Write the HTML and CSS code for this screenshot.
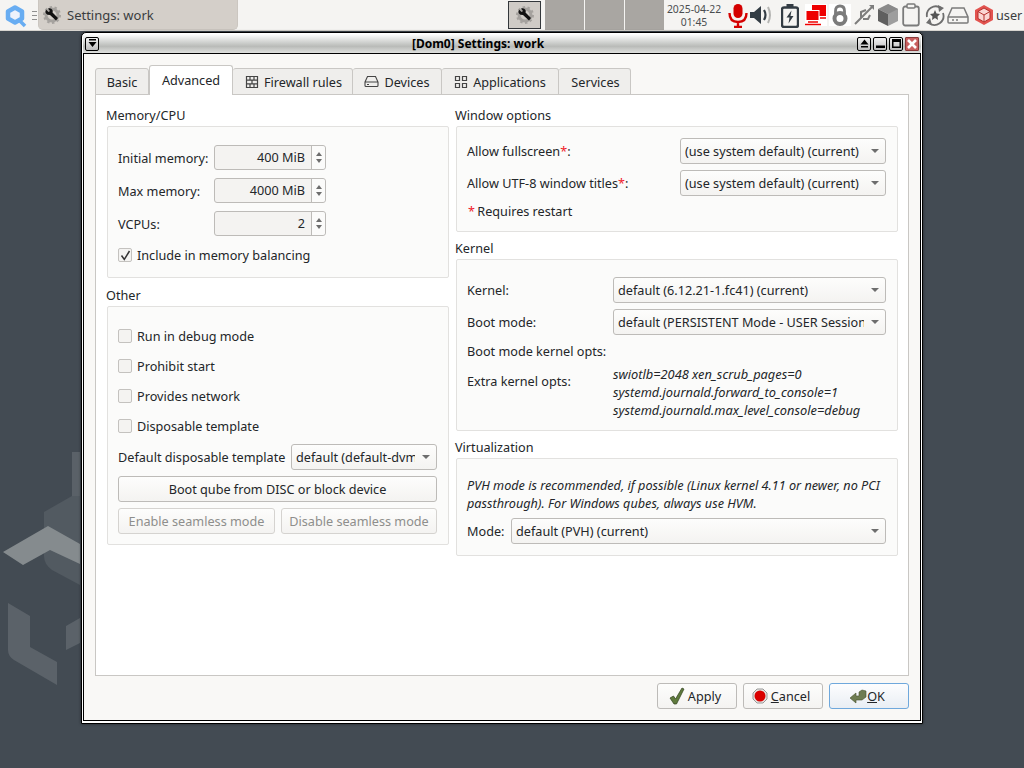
FILE: index.html
```html
<!DOCTYPE html>
<html lang="en">
<head>
<meta charset="utf-8">
<title>Settings: work</title>
<link rel="stylesheet" href="styles.css">
</head>
<body>
<svg class="wallpaper" viewBox="0 0 100 300" width="100" height="300" aria-hidden="true">
  <path d="M72 22 L80 22 L80 100 L72 88 Z" fill="#5a6168"/>
  <path d="M44 82 L72 66 L80 66 L80 155 L52 140 Q44 134 44 126 Z" fill="#525a61"/>
  <path d="M3 122 L48 96 L80 114 L80 134 L50 120 L23 135 Z" fill="#858b8e"/>
  <path d="M8 173 L30 186 L30 217 L57 232 L57 255 L14 230 Q8 226 8 220 Z" fill="#5b6269"/>
  <path d="M66 196 L80 188 L80 213 L66 220 Z" fill="#5b6269"/>
</svg>
<header class="panel">
  <svg class="logo" width="22" height="26" viewBox="0 0 22 26"><path d="M10 5.500 L17 9.500 V16.500 L10 20.500 L3 16.500 V9.500 Z" fill="#eef2fb" stroke="#68adf2" stroke-width="4.500" stroke-linejoin="round"/><path d="M15 19 L20 24" stroke="#68adf2" stroke-width="3.500"/></svg>
  <div class="handle"><i></i><i></i><i></i></div>
  <div class="task">
    <svg width="18" height="18" viewBox="0 0 18 18"><circle cx="9" cy="9" r="6" fill="none" stroke="#a5a29e" stroke-width="3"/><circle cx="9" cy="9" r="8" fill="none" stroke="#a5a29e" stroke-width="2" stroke-dasharray="2.500 2.500"/><path d="M3 3.500 L5.500 6 L7 5 L5 2.500 Q8 1.500 9.500 4 Q10 5.500 9.500 6.500 L15 12 L13 14.500 L7 9 Q4 9 3 7.500 Q2 5.500 3 3.500 Z" fill="#111"/></svg>
    <span>Settings: work</span>
  </div>
  <div class="pager">
    <div class="desk desk-on"><svg width="18" height="18" viewBox="0 0 18 18"><circle cx="9" cy="9" r="6" fill="none" stroke="#a5a29e" stroke-width="3"/><circle cx="9" cy="9" r="8" fill="none" stroke="#a5a29e" stroke-width="2" stroke-dasharray="2.500 2.500"/><path d="M3 3.500 L5.500 6 L7 5 L5 2.500 Q8 1.500 9.500 4 Q10 5.500 9.500 6.500 L15 12 L13 14.500 L7 9 Q4 9 3 7.500 Q2 5.500 3 3.500 Z" fill="#111"/></svg></div>
    <div class="desk"></div><div class="desk"></div><div class="desk"></div>
  </div>
  <div class="clock"><span>2025-04-22</span><span>01:45</span></div>
  <div class="tray">
    <svg width="22" height="26" viewBox="0 0 22 26"><rect x="6.500" y="2" width="9" height="14" rx="4.500" fill="#d40000"/><path d="M2.500 11 Q2.500 20 11 20 Q19.500 20 19.500 11 M11 20 V25 M7 25 H15" fill="none" stroke="#d40000" stroke-width="2.400"/></svg>
    <svg width="24" height="26" viewBox="0 0 24 26"><path d="M1 10 H5 L12 4 V22 L5 16 H1 Z" fill="#333c44"/><path d="M15 8 Q18 13 15 18" fill="none" stroke="#333c44" stroke-width="2.200"/><path d="M19 5 Q23 13 19 21" fill="none" stroke="#b5b5b3" stroke-width="2"/></svg>
    <svg class="t-batt" width="18" height="26" viewBox="0 0 18 26"><path d="M3 5.500 H15 Q17 5.500 17 7.500 V23 Q17 25 15 25 H3 Q1 25 1 23 V7.500 Q1 5.500 3 5.500 Z" fill="none" stroke="#333c44" stroke-width="2.400"/><path d="M5.500 2 H12.500 V6 H5.500 Z" fill="#333c44"/><path d="M10.500 8.500 L5.500 15.500 H8.500 L7.500 21.500 L12.500 14 H9.500 Z" fill="#333c44"/></svg>
    <svg class="t-net" width="22" height="22" viewBox="0 0 22 22"><rect width="22" height="22" fill="#fff"/><rect x="7.500" y="1.500" width="13" height="10" fill="#e00" stroke="#e00"/><rect x="1" y="6.500" width="13" height="10" fill="#e00" stroke="#fff"/><path d="M0 20.500 H16 M3 18 H13 M15 14 H21" stroke="#e00" stroke-width="1.500"/></svg>
    <svg class="t-lock" width="22" height="22" viewBox="0 0 22 22"><rect width="22" height="22" fill="#fff"/><path d="M6.500 10 V7 Q6.500 2 11 2 Q15.500 2 15.500 7 V10" fill="none" stroke="#7b7b7b" stroke-width="2.800"/><circle cx="11" cy="14.500" r="5.500" fill="none" stroke="#7b7b7b" stroke-width="4"/></svg>
    <svg class="t-usb" width="22" height="22" viewBox="0 0 22 22"><path d="M2 20 L19 3 M8 14 L8 8 L13 6 M10 15 L15 15 L17 11" fill="none" stroke="#7d7d7d" stroke-width="2"/><path d="M16 1 L21 1 L21 6 Z" fill="#7d7d7d"/></svg>
    <svg class="t-cube" width="22" height="24" viewBox="0 0 22 24"><path d="M11 1 L21 6 V18 L11 23 Z" fill="#9e9e9e"/><path d="M11 1 L1 6 L11 11 L21 6 Z" fill="#8a8a8a"/><path d="M1 6 V18 L11 23 V11 Z" fill="#5f5f5f"/></svg>
    <svg class="t-clip" width="18" height="24" viewBox="0 0 18 24"><rect x="1.200" y="3.500" width="15.600" height="19" rx="2" fill="none" stroke="#7b7b7b" stroke-width="1.800"/><rect x="5" y="1" width="8" height="4" rx="1" fill="#f5f4f2" stroke="#7b7b7b" stroke-width="1.500"/></svg>
    <svg class="t-upd" width="22" height="24" viewBox="0 0 22 24"><path d="M3 14 A9 9 0 0 1 17 5 M19 10 A9 9 0 0 1 5 20" fill="none" stroke="#6e6e6e" stroke-width="1.800"/><path d="M14 2 L20 5 L15 9 Z M8 22 L2 20 L6 15 Z" fill="#6e6e6e"/><path d="M11 7 L12.500 10.500 L16 11 L13.500 13.500 L14 17 L11 15 L8 17 L8.500 13.500 L6 11 L9.500 10.500 Z" fill="#555"/></svg>
    <svg class="t-drive" width="22" height="22" viewBox="0 0 22 22"><path d="M1 13 L5 4 H17 L21 13 V18 Q21 19 20 19 H2 Q1 19 1 18 Z M1 13 H21 M5 16 H7 M9 16 H11" fill="none" stroke="#7b7b7b" stroke-width="1.500"/></svg>
    <svg class="t-qube" width="20" height="22" viewBox="0 0 20 22"><path d="M10 1 L19 6 V16 L10 21 L1 16 V6 Z" fill="#e2534f"/><path d="M10 4 L16 7.500 V14.500 L10 18 L4 14.500 V7.500 Z" fill="#fbd6d4" stroke="#b5302c"/><path d="M4 7.500 L10 11 L16 7.500 M10 11 V18" fill="none" stroke="#b5302c"/></svg>
    <span class="user">user</span>
  </div>
</header>
<main class="window">
  <div class="titlebar">
    <span class="wbtn wbtn-menu"><svg width="9" height="9" viewBox="0 0 9 9"><path d="M1 0 H8 V1.500 H1 Z M0.500 3 H8.500 L4.500 8 Z" fill="#000"/></svg></span>
    <span class="title">[Dom0] Settings: work</span>
    <span class="wbtn"><svg width="9" height="9" viewBox="0 0 9 9"><path d="M0.500 5.500 H8.500 L4.500 0.500 Z M1 7 H8 V8.500 H1 Z" fill="#000"/></svg></span>
    <span class="wbtn"><svg width="9" height="9" viewBox="0 0 9 9"><path d="M0 6.500 H9 V9 H0 Z" fill="#000"/></svg></span>
    <span class="wbtn"><svg width="9" height="9" viewBox="0 0 9 9"><path d="M0 0 H9 V9 H0 Z M1.500 3 V7.500 H7.500 V3 Z" fill="#000" fill-rule="evenodd"/></svg></span>
    <span class="wbtn wbtn-close"><svg width="10" height="10" viewBox="0 0 10 10"><path d="M1 1 L9 9 M9 1 L1 9" stroke="#fff" stroke-width="2.600"/></svg></span>
  </div>
  <div class="client">
    <nav class="tabs">
      <div class="tab tab-basic">Basic</div>
      <div class="tab tab-adv">Advanced</div>
      <div class="tab tab-fw"><svg width="14" height="14" viewBox="0 0 14 14"><path d="M1.500 1.500 H12.500 V12.500 H1.500 Z M1.500 5.200 H12.500 M1.500 8.800 H12.500 M5 1.500 V5.200 M9 1.500 V5.200 M7 5.200 V8.800 M5 8.800 V12.500 M9 8.800 V12.500" fill="none" stroke="#444" stroke-width="1.200"/></svg>Firewall rules</div>
      <div class="tab tab-dev"><svg width="15" height="13" viewBox="0 0 15 13"><path d="M1 7 L3.500 1.500 H11.500 L14 7 V10.500 Q14 11.500 13 11.500 H2 Q1 11.500 1 10.500 Z M1 7 H14 M3 9.500 H5" fill="none" stroke="#444" stroke-width="1.100"/></svg>Devices</div>
      <div class="tab tab-app"><svg width="14" height="14" viewBox="0 0 14 14"><path d="M1.500 1.500 H5.500 V5.500 H1.500 Z M8.500 1.500 H12.500 V5.500 H8.500 Z M1.500 8.500 H5.500 V12.500 H1.500 Z M8.500 8.500 H12.500 V12.500 H8.500 Z" fill="none" stroke="#444" stroke-width="1.200"/></svg>Applications</div>
      <div class="tab tab-svc">Services</div>
    </nav>
    <section class="pane">
      <div class="col col-left">
        <h2>Memory/CPU</h2>
        <div class="box box-mem">
          <div class="spin-row"><label>Initial memory:</label><div class="spin"><span class="spin-val">400 MiB</span><span class="arrows"><i class="up"></i><i class="down"></i></span></div></div>
          <div class="spin-row"><label>Max memory:</label><div class="spin"><span class="spin-val">4000 MiB</span><span class="arrows"><i class="up"></i><i class="down"></i></span></div></div>
          <div class="spin-row"><label>VCPUs:</label><div class="spin"><span class="spin-val">2</span><span class="arrows"><i class="up"></i><i class="down"></i></span></div></div>
          <div class="check check-bal"><span class="cb"><svg width="11" height="11" viewBox="0 0 11 11"><path d="M1.500 5.500 L4.300 9.500 L9.500 1" fill="none" stroke="#333" stroke-width="1.500"/></svg></span>Include in memory balancing</div>
        </div>
        <h2 class="h-next">Other</h2>
        <div class="box box-other">
          <div class="check"><span class="cb"></span>Run in debug mode</div>
          <div class="check"><span class="cb"></span>Prohibit start</div>
          <div class="check"><span class="cb"></span>Provides network</div>
          <div class="check"><span class="cb"></span>Disposable template</div>
          <div class="dvm-row"><label>Default disposable template</label><div class="combo combo-dvm"><span class="combo-text">default (default-dvm)</span><i class="caret"></i></div></div>
          <div class="btn btn-wide">Boot qube from DISC or block device</div>
          <div class="seam-row"><div class="btn btn-off btn-en">Enable seamless mode</div><div class="btn btn-off btn-dis">Disable seamless mode</div></div>
        </div>
      </div>
      <div class="col col-right">
        <h2>Window options</h2>
        <div class="box box-win">
          <div class="form-row form-win"><label>Allow fullscreen<b>*</b>:</label><div class="combo"><span class="combo-text">(use system default) (current)</span><i class="caret"></i></div></div>
          <div class="form-row form-win"><label>Allow UTF-8 window titles<b>*</b>:</label><div class="combo"><span class="combo-text">(use system default) (current)</span><i class="caret"></i></div></div>
          <div class="note"><b>*</b> Requires restart</div>
        </div>
        <h2 class="h-next">Kernel</h2>
        <div class="box box-kern">
          <div class="form-row form-kern"><label>Kernel:</label><div class="combo"><span class="combo-text">default (6.12.21-1.fc41) (current)</span><i class="caret"></i></div></div>
          <div class="form-row form-kern"><label>Boot mode:</label><div class="combo"><span class="combo-text">default (PERSISTENT Mode - USER Session)</span><i class="caret"></i></div></div>
          <div class="opts-head">Boot mode kernel opts:</div>
          <div class="opts-row"><label>Extra kernel opts:</label><div class="opts-text">swiotlb=2048 xen_scrub_pages=0<br>systemd.journald.forward_to_console=1<br>systemd.journald.max_level_console=debug</div></div>
        </div>
        <h2 class="h-next">Virtualization</h2>
        <div class="box box-virt">
          <p class="virt-text">PVH mode is recommended, if possible (Linux kernel 4.11 or newer, no PCI passthrough). For Windows qubes, always use HVM.</p>
          <div class="mode-row"><label>Mode:</label><div class="combo"><span class="combo-text">default (PVH) (current)</span><i class="caret"></i></div></div>
        </div>
      </div>
    </section>
    <footer class="actions">
      <div class="btn act"><svg width="16" height="18" viewBox="0 0 16 18"><path d="M1 11 L4.500 9 L6.500 12 L13 1 L15 2 L7.500 17 H5 Z" fill="#5f7a3c" stroke="#2f3f1e" stroke-width="0.700"/></svg>Apply</div>
      <div class="btn act"><svg width="16" height="16" viewBox="0 0 16 16"><path d="M5 1 H11 L15 5 V11 L11 15 H5 L1 11 V5 Z" fill="#e8e6e3" stroke="#999"/><circle cx="8" cy="8" r="5.500" fill="#d90000"/></svg><span><u>C</u>ancel</span></div>
      <div class="btn act act-ok"><svg width="18" height="16" viewBox="0 0 18 16"><path d="M1 10 L7 5 V8 H10 V4 L13 2 L17 3 V9 L13 12 H7 V15 Z" fill="#6e7c52" stroke="#48532f" stroke-width="0.600"/></svg><span><u>O</u>K</span></div>
    </footer>
  </div>
</main>
</body>
</html>
```
FILE: styles.css
```css
* { box-sizing: border-box; }
html, body { margin: 0; height: 100%; }
body {
  position: relative;
  width: 1024px;
  height: 768px;
  overflow: hidden;
  background: #434b53;
  font: 12.67px/18px "Noto Sans", sans-serif;
  color: #232629;
}
label { display: block; }
h2 { margin: 0; height: 18px; font: inherit; }
u { text-decoration: underline; }

.wallpaper { position: absolute; left: 0; top: 430px; }

.panel {
  position: relative;
  display: flex;
  align-items: center;
  height: 31px;
  background: #f5f4f2;
  border-bottom: 1px solid #d8d5d0;
}
.logo { margin-left: 5px; flex: none; }
.handle { display: flex; flex-direction: column; gap: 3px; width: 5px; margin: 0 1px 0 5px; }
.handle i { height: 1px; background: #8f8f8f; }
.task {
  display: flex;
  align-items: center;
  width: 200px;
  height: 30px;
  padding-left: 4px;
  background: #d4cfc9;
  border-radius: 0 0 5px 5px;
  border: 1px solid #cbc6c0;
  border-top: 0;
  color: #3a3d40;
  font-size: 13px;
}
.task span { margin-left: 6px; }
.pager { display: flex; height: 30px; margin-left: 267px; background: #f5f4f2; }
.desk { width: 39px; height: 30px; margin-left: 1px; background: #a9a6a2; }
.desk-on {
  display: flex;
  align-items: center;
  justify-content: center;
  width: 33px;
  height: 28px;
  margin: 1px 3px 0 3px;
  background: #cfcbc6;
  border: 1px solid #33373b;
}
.clock {
  display: flex;
  flex-direction: column;
  align-items: center;
  width: 60px;
  padding-top: 1px;
  font-size: 10.4px;
  line-height: 13px;
  color: #4a4d50;
}
.tray { display: flex; align-items: center; margin-left: 3px; }
.tray svg { flex: none; }
.t-batt { margin-left: 8px; margin-right: 6px; }
.t-lock, .t-usb, .t-cube { margin-left: 2px; }
.t-clip { margin-left: 3px; }
.t-upd { margin-left: 4px; }
.t-drive { margin-left: 1px; }
.t-qube { margin-left: 5px; }
.user { margin-left: 2px; color: #3a3d40; }

.window {
  position: absolute;
  left: 81px;
  top: 32px;
  display: flex;
  flex-direction: column;
  width: 842px;
  height: 692px;
  padding: 1px 1px 2px;
  background: #fff;
  border: 1px solid #000;
  border-radius: 5px 5px 0 0;
  box-shadow: 0 0 3px rgba(0, 0, 0, 0.5);
}
.titlebar {
  display: flex;
  align-items: center;
  gap: 2px;
  height: 19px;
  padding: 0 2px;
  background: linear-gradient(#ffffff, #b9bbb8 65%, #dfe0de);
  flex: none;
}
.title { flex: 1; text-align: center; font-size: 12px; font-weight: 700; color: #000; }
.wbtn {
  display: flex;
  align-items: center;
  justify-content: center;
  width: 14px;
  height: 14px;
  background: linear-gradient(#f2f2f2, #bdbdbd);
  border: 1px solid #000;
  border-radius: 2px;
}
.wbtn-close { background: #c96060; border-color: #8a3a3a; border-radius: 1px; }
.client {
  display: flex;
  flex-direction: column;
  flex: 1;
  padding: 11px 11px 0;
  background: #f9f8f6;
  border: 1px solid #000;
}

.tabs { display: flex; align-items: flex-end; flex: none; height: 30px; position: relative; z-index: 1; margin-bottom: -1px; }
.tab {
  display: flex;
  align-items: center;
  justify-content: center;
  gap: 5px;
  height: 27px;
  background: #efeeec;
  border: 1px solid #c9c7c4;
  border-left: 0;
  border-radius: 3px 3px 0 0;
  color: #232629;
}
.tab-basic { width: 54px; border-left: 1px solid #c9c7c4; }
.tab-adv { width: 84px; height: 30px; padding-bottom: 1px; background: #fff; border-left: 1px solid #c9c7c4; border-bottom: 0; }
.tab-fw { width: 120px; padding-left: 2px; }
.tab-dev { width: 89px; }
.tab-app { width: 117px; }
.tab-svc { width: 72px; padding-left: 2px; }

.pane {
  display: flex;
  flex: none;
  gap: 6px;
  height: 582px;
  padding: 11px 10px 0;
  background: #fff;
  border: 1px solid #c9c7c4;
}
.col { display: flex; flex-direction: column; }
.col-left { width: 343px; }
.col-right { width: 443px; }
.h-next { margin-top: 8px; }
.col-right .h-next { margin-top: 7px; }
.box {
  margin-top: 2px;
  margin-left: 1px;
  background: #fbfbfa;
  border: 1px solid #e2e1df;
  border-radius: 2px;
}
.col-right .box { width: 442px; }
.col-left .box { width: 342px; }

.box-mem { height: 152px; padding: 18px 10px 0; }
.spin-row { display: flex; align-items: center; height: 25px; margin-bottom: 8px; }
.spin-row label { width: 96px; }
.spin {
  display: flex;
  width: 112px;
  height: 25px;
  background: #f4f3f1;
  border: 1px solid #bdbbb8;
  border-radius: 3px;
}
.spin-val { flex: 1; padding-right: 6px; text-align: right; line-height: 23px; }
.arrows {
  display: flex;
  flex-direction: column;
  align-items: center;
  justify-content: center;
  gap: 3px;
  width: 14px;
  background: #fbfbfa;
  border-left: 1px solid #bdbbb8;
  border-radius: 0 3px 3px 0;
}
.up, .down { display: block; width: 0; height: 0; border: 3.500px solid transparent; border-top: 0; border-bottom: 4px solid #6d6d6d; }
.down { border-bottom: 0; border-top: 4px solid #6d6d6d; }

.check { display: flex; align-items: center; gap: 5px; height: 30px; }
.check-bal { height: 18px; margin-top: 10px; }
.cb {
  display: flex;
  align-items: center;
  justify-content: center;
  width: 14px;
  height: 14px;
  background: #f4f3f1;
  border: 1px solid #c4c2bf;
  border-radius: 2px;
}
.box-other { height: 239px; padding: 14px 11px 0 10px; }
.dvm-row { display: flex; align-items: center; justify-content: space-between; margin-top: 3px; }
.combo {
  position: relative;
  display: flex;
  align-items: center;
  width: 206px;
  height: 26px;
  padding: 0 21px 0 4px;
  background: linear-gradient(#fdfdfc, #f4f3f1);
  border: 1px solid #bdbbb8;
  border-radius: 3px;
}
.combo-text { overflow: hidden; white-space: nowrap; flex: 1; }
.combo-dvm { width: 146px; }
.caret { position: absolute; right: 6px; top: 10px; width: 0; height: 0; border: 4.500px solid transparent; border-bottom: 0; border-top: 4.500px solid #6d6d6d; }

.btn {
  display: flex;
  align-items: center;
  justify-content: center;
  height: 26px;
  background: linear-gradient(#fdfdfc, #f4f3f1);
  border: 1px solid #bdbbb8;
  border-radius: 3px;
}
.btn-wide { margin-top: 6px; }
.seam-row { display: flex; justify-content: space-between; margin-top: 6px; }
.btn-off { color: #8e8e8c; border-color: #d5d3d0; }
.btn-en { width: 157px; }
.btn-dis { width: 156px; }

.box-win { height: 106px; padding: 11px 11px 0 10px; }
.form-row { display: flex; align-items: center; justify-content: space-between; margin-bottom: 6px; }
.form-kern .combo { width: 273px; }
b { font-weight: 400; color: #f0202a; }
.note { margin: 6px 0 0 1px; }
.note b { margin-right: -1px; }
.box-kern { height: 172px; padding: 17px 11px 0 10px; }
.opts-head { margin-top: 7px; }
.opts-row { display: flex; align-items: flex-start; margin-top: 5px; }
.opts-row label { width: 146px; padding-top: 7px; }
.opts-text { font-style: italic; font-size: 12.8px; }
.box-virt { height: 98px; padding: 17px 11px 0 10px; }
.virt-text { margin: 0; font-style: italic; }
.mode-row { display: flex; align-items: center; justify-content: space-between; margin-top: 6px; }
.mode-row .combo { width: 375px; }

.actions { display: flex; justify-content: flex-end; gap: 6px; margin-top: 7px; }
.act { width: 80px; gap: 3px; padding-right: 4px; }
.act-ok { border-color: #6fa8dc; background: linear-gradient(#fdfdfe, #e9eef4); gap: 0; }
```
